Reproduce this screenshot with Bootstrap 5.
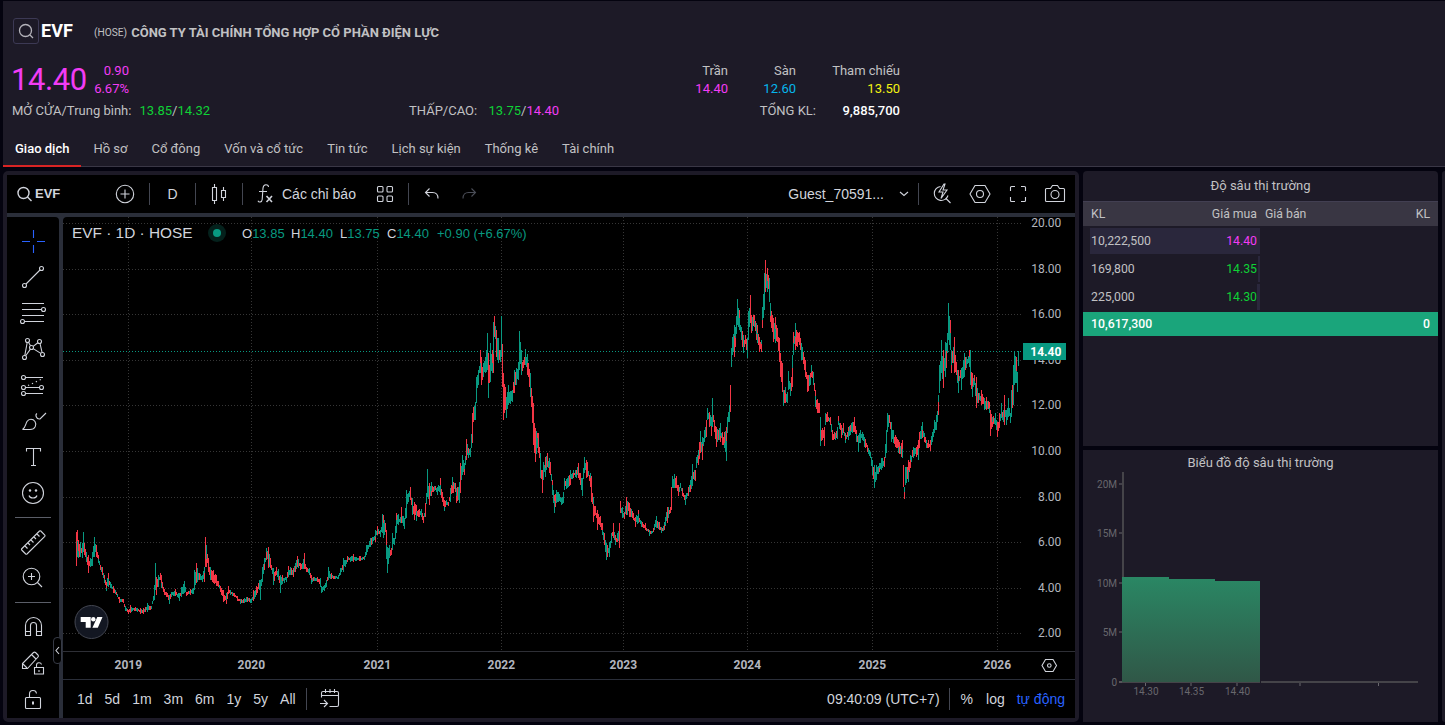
<!DOCTYPE html>
<html lang="vi">
<head>
  <meta charset="UTF-8" />
  <meta name="viewport" content="width=device-width, initial-scale=1">
  <title>EVF - Giao dịch</title>
  <link href="https://cdn.jsdelivr.net/npm/bootstrap@5.3.0/dist/css/bootstrap.min.css" rel="stylesheet" />
  <style>
    body {
      height: 725px;
      overflow: hidden;
      background: #04030f;
      color: #c1c1c3;
      font: 13px/18px Roboto, sans-serif;
      padding: 1px 0 3px 3px;
    }
    .fuchsia { color: #f23cf5; }
    .up { color: #0fd136; }
    .floor { color: #06b6ec; }
    .ref { color: #f3f312; }

    /* header */
    .stock-head { height: 166px; background: #1d1a27; border-bottom: 1px solid #3a3746; flex: none; }
    .info { width: 897px; padding: 17px 0 0 10px; }
    .search-box { width: 26px; height: 26px; border: 1px solid #3c3954; border-radius: 3px; }
    .code { font-size: 18px; width: 55px; padding-left: 2px; }
    .exch { font-size: 10.2px; }
    .price { font-size: 31px; line-height: 36px; width: 82px; margin-left: -2px; letter-spacing: -.4px; }
    .chg { width: 36px; }
    .tabs { padding-left: 0; margin-top: 11px; height: 36px; }
    .tabs a { color: #c1c1c3; text-decoration: none; padding: 9px 12px 0; height: 36px; }
    .tabs a.active { color: #fff; font-weight: 500; border-bottom: 2px solid #d92424; }

    /* chart widget */
    .tv { width: 1076px; height: 551px; border: 4px solid #1d1a27; border-radius: 5px; background: #2a2e39; color: #d1d4dc; font: 14px/18px "Liberation Sans", Arial, sans-serif; }
    .tv svg { display: block; flex: none; }
    .tv-top { height: 38px; background: #000; }
    .tv-top .cell { display: flex; align-items: center; justify-content: center; flex: none; }
    .vline { width: 1px; height: 22px; background: #434651; flex: none; margin: 0 4px; }
    .tools { width: 52px; background: #000; padding-top: 6px; border-radius: 0 4px 0 0; }
    .tools .tool { height: 36px; display: flex; align-items: center; justify-content: center; }
    .tools hr { width: 36px; margin: 6px auto; border: 0; height: 1px; background: #5b5e68; opacity: 1; }
    .pane { width: 1012px; background: #000; border-radius: 4px 0 0 0; }
    .ic { fill: none; stroke: #d1d4dc; stroke-width: 1.1; }
    .legend { top: 6px; left: 9px; height: 20px; }
    .legend .sym { font-size: 15.4px; width: 136px; }
    .legend .ohlc { font-size: 13px; color: #d1d4dc; padding-top: 1px; }
    .legend i { font-style: normal; color: #089981; }
    .dot { width: 18px; height: 18px; border-radius: 50%; background: #04211c; margin-right: 16px; }
    .dot::after { content: ""; display: block; width: 8px; height: 8px; margin: 5px; border-radius: 50%; background: #089981; }
    .handle { left: 46px; top: 420px; width: 9px; height: 27px; background: #000; border: 1px solid #363a45; border-radius: 4px; }
    .tv-foot { height: 39px; border-top: 1px solid #2a2e39; }
    .tv-foot .rng { padding: 0 6px; }
    .axis { font: 12px Roboto, sans-serif; fill: #b2b5be; }

    /* depth */
    .side { width: 355px; margin-left: 4px; font-size: 12.25px; }
    .panel { background: #1d1a27; }
    .side-title { height: 30px; padding-top: 6px; text-align: center; border-radius: 4px 4px 0 0; }
    .depth-head { height: 25px; background: #393643; border-top: 1px solid #423f52; padding-top: 3px; }
    .half { width: 177px; flex: none; display: flex; justify-content: space-between; padding: 0 3px 0 8px; position: relative; }
    .half.sell { width: 178px; padding: 0 8px 0 5px; }
    .depth-row { height: 28px; padding: 2px 0 0; }
    .depth-row .half { height: 26px; align-items: center; }
    .depth-row .bar { position: absolute; right: 0; top: 0; height: 26px; background: #2a273c; }
    .depth-row span { position: relative; }
    .depth-total { height: 24px; margin-top: 2px; background: #1aa57b; color: #fff; font-weight: 500; padding: 0 8px; }
    .depth-axis { font: 10px Roboto, sans-serif; fill: #68676d; }
  </style>
</head>
<body class="d-flex flex-column">

<div class="stock-head">
  <div class="info">
    <div class="d-flex align-items-center">
      <div class="search-box d-flex align-items-center justify-content-center">
        <svg width="16" height="16" fill="none" stroke="#b4b3ba" stroke-width="1.3"><circle cx="7.5" cy="7.5" r="6"/><path d="M12 12l3 3"/></svg>
      </div>
      <div class="code fw-bold text-white">EVF</div>
      <div class="d-flex align-items-center pt-1"><span class="exch me-1">(HOSE)</span><b>CÔNG TY TÀI CHÍNH TỔNG HỢP CỔ PHẦN ĐIỆN LỰC</b></div>
    </div>
    <div class="d-flex" style="margin-top:18px">
      <div class="price fuchsia">14.40</div>
      <div class="chg text-end fuchsia">0.90<br>6.67%</div>
      <div class="ms-auto d-flex text-end">
        <div>Trần<br><span class="fuchsia">14.40</span></div>
        <div style="width:68px">Sàn<br><span class="floor">12.60</span></div>
        <div style="width:104px">Tham chiếu<br><span class="ref">13.50</span></div>
      </div>
    </div>
    <div class="d-flex mt-1">
      <div style="width:397px;margin-left:-1px"><span style="margin-right:8px">MỞ CỬA/Trung bình:</span><span class="up">13.85</span>/<span class="up">14.32</span></div>
      <div><span class="me-2">THẤP/CAO:</span> <span class="up">13.75</span>/<span class="fuchsia">14.40</span></div>
      <div class="ms-auto">TỔNG KL:</div>
      <div class="text-white text-end fw-medium" style="width:84px;font-weight:500">9,885,700</div>
    </div>
  </div>
  <nav class="tabs d-flex">
    <a class="active" href="#">Giao dịch</a>
    <a href="#">Hồ sơ</a>
    <a href="#">Cổ đông</a>
    <a href="#">Vốn và cổ tức</a>
    <a href="#">Tin tức</a>
    <a href="#">Lịch sự kiện</a>
    <a href="#">Thống kê</a>
    <a href="#">Tài chính</a>
  </nav>
</div>

<div class="d-flex mt-1">
  <div class="tv d-flex flex-column">
    <!-- top toolbar -->
    <div class="tv-top d-flex align-items-center">
      <div class="cell justify-content-start" style="width:98px;padding-left:9px">
        <svg class="ic" width="19" height="18" style="stroke-width:1.4"><circle cx="7.5" cy="8" r="5.5"/><path d="M11.5 12l4 4"/></svg>
        <b style="font-size:13px">EVF</b>
      </div>
      <div class="cell" style="width:40px"><svg class="ic" width="20" height="20"><circle cx="10" cy="10" r="8.7"/><path d="M10 5.5v9M5.5 10h9"/></svg></div>
      <div class="vline"></div>
      <div class="cell" style="width:37px">D</div>
      <div class="vline"></div>
      <div class="cell" style="width:38px"><svg class="ic" width="28" height="28"><path d="M7.5 7.500h4v13h-4zM9.500 4v3.500M9.500 20.500v3.500M16.500 10.500h4v7h-4zM18.500 7v3.500M18.500 17.500v3.500"/></svg></div>
      <div class="vline"></div>
      <div class="cell justify-content-start" style="width:119px;padding-left:5px">
        <svg class="ic" width="28" height="28"><path d="M16.500 7c0-3-5-3.500-5.500 1l-.8 11.500c-.3 3-3.500 3.200-4.200 1.200M7 11.500h8"/><path d="M14.500 16l5.500 6M20 16l-5.500 6" stroke-width="1.600"/></svg>
        <span style="margin-left:2px">Các chỉ báo</span>
      </div>
      <div class="cell" style="width:38px"><svg class="ic" width="18" height="18"><rect x="1.500" y="1.500" width="5.500" height="5.500" rx="1"/><rect x="11" y="1.500" width="5.500" height="5.500" rx="1"/><rect x="1.500" y="11" width="5.500" height="5.500" rx="1"/><rect x="11" y="11" width="5.500" height="5.500" rx="1"/></svg></div>
      <div class="vline"></div>
      <div class="cell" style="width:37px"><svg class="ic" width="16" height="14"><path d="M5.500 1.500l-4 4 4 4M1.500 5.500h7c3 0 5.500 2 5.500 6"/></svg></div>
      <div class="cell" style="width:38px"><svg class="ic" width="16" height="14" style="stroke:#4a4d57"><path d="M10.500 1.500l4 4-4 4M14.500 5.500h-7c-3 0-5.500 2-5.500 6"/></svg></div>
      <div class="ms-auto" style="padding-right:9px">Guest_70591...</div>
      <div class="cell" style="width:21px"><svg class="ic" width="10" height="6"><path d="M1 1l4 3.500L9 1"/></svg></div>
      <div class="vline"></div>
      <div class="cell" style="width:38px"><svg class="ic" width="22" height="22"><path d="M9.500 3.500a7 7 0 1 0 7.500 9M15 15.500l4.500 4.500M13 1L8 9h4l-2 6.500L16 7h-4l2-6z"/></svg></div>
      <div class="cell" style="width:38px"><svg class="ic" width="22" height="20"><path d="M6 1.500h10l5 8.500-5 8.500H6L1 10z"/><circle cx="11" cy="10" r="3.500"/></svg></div>
      <div class="cell" style="width:37px"><svg class="ic" width="18" height="18"><path d="M1.500 6V2.500a1 1 0 0 1 1-1H6M12 1.500h3.500a1 1 0 0 1 1 1V6M16.500 12v3.500a1 1 0 0 1-1 1H12M6 16.500H2.500a1 1 0 0 1-1-1V12"/></svg></div>
      <div class="cell" style="width:38px;margin-right:1px"><svg class="ic" width="22" height="20"><path d="M2.500 4.500h4l2-3h5l2 3h4a1 1 0 0 1 1 1v11a1 1 0 0 1-1 1h-17a1 1 0 0 1-1-1v-11a1 1 0 0 1 1-1z"/><circle cx="11" cy="10.500" r="4"/></svg></div>
    </div>

    <div class="d-flex position-relative mt-1" style="height:501px">
      <!-- drawing tools -->
      <div class="tools me-1" id="tools"></div>

      <div class="pane position-relative d-flex flex-column">
        <svg id="chart" width="1012" height="462" viewBox="63 217 1012 462"></svg>
        <div class="legend position-absolute d-flex align-items-center">
          <span class="sym">EVF · 1D · HOSE</span>
          <span class="dot"></span>
          <span class="ohlc d-flex">
            <span style="width:49px">O<i>13.85</i></span><span style="width:49px">H<i>14.40</i></span><span style="width:47px">L<i>13.75</i></span><span style="width:50px">C<i>14.40</i></span><i>+0.90 (+6.67%)</i>
          </span>
        </div>
        <div class="tv-foot d-flex align-items-center" style="padding-left:8px">
          <span class="rng">1d</span><span class="rng">5d</span><span class="rng">1m</span><span class="rng">3m</span><span class="rng">6m</span><span class="rng">1y</span><span class="rng">5y</span><span class="rng">All</span>
          <div class="vline"></div>
          <svg class="ic" width="22" height="22" style="margin-left:8px"><path d="M2.500 9.500V5a1.500 1.500 0 0 1 1.500-1.500h14A1.500 1.500 0 0 1 19.500 5v12a1.500 1.500 0 0 1-1.500 1.500h-7.500M2.500 7.500h17M6.500 1v4M11 1v4M15.500 1v4M1 15.500h7M5 12l3.500 3.500L5 19"/></svg>
          <span class="ms-auto">09:40:09 (UTC+7)</span>
          <div class="vline" style="margin-left:9px;margin-right:11px"></div>
          <span>%</span>
          <span style="margin-left:13px">log</span>
          <span style="margin:0 10px 0 12px;color:#2962ff">tự động</span>
        </div>
      </div>
      <div class="handle position-absolute"><svg class="ic" width="7" height="25"><path d="M5 9l-3 3.500L5 16"/></svg></div>
    </div>
  </div>

  <div class="side">
    <div class="panel" style="height:275px;border-radius:4px 4px 0 0">
      <div class="side-title" style="font-size:13px">Độ sâu thị trường</div>
      <div class="depth-head d-flex">
        <div class="half"><span>KL</span><span>Giá mua</span></div>
        <div class="half sell"><span>Giá bán</span><span>KL</span></div>
      </div>
      <div id="bids"></div>
      <div class="depth-total d-flex align-items-center justify-content-between"><span>10,617,300</span><span>0</span></div>
    </div>
    <div class="panel mt-1" style="height:272px">
      <div class="text-center" style="height:22px;padding-top:4px;font-size:13px">Biểu đồ độ sâu thị trường</div>
      <svg class="d-block" id="depth" width="355" height="250" viewBox="1083 472 355 250"></svg>
    </div>
  </div>
  <div class="panel ms-auto rounded-start" style="width:3px"></div>
</div>

<script src="https://cdn.jsdelivr.net/npm/bootstrap@5.3.0/dist/js/bootstrap.bundle.min.js"></script>
<script>
  // ---- left toolbar icons (28x28 box) ----
  const c = (x, y, r = 2) => `<circle cx="${x}" cy="${y}" r="${r}"/>`;
  const p = d => `<path d="${d}"/>`;
  const tools = [
    `<g stroke="#2962ff">${p('M14.5 3v8M14.5 18v8M3 14.500h8M18 14.500h8')}</g>`,
    c(22.5, 5.5) + c(5.5, 22.5) + p('M7 21L21 7'),
    p('M3 4.500h22M3 10.500h19.500M3 16.500h22M5.500 22.500H25') + c(24.5, 10.5) + c(3.5, 22.5),
    c(8.5, 5.5) + c(20.5, 6.5) + c(12.5, 12.5) + c(5.5, 22.5) + c(23.5, 19.5) + p('M9.500 7.300l2 3.500M8.200 7.500L5.800 20.500M6.700 20.800l4.700-6.700M14.200 11.400l4.600-3.600M21 8.500l2.100 9M14.200 13.600l7.600 4.800'),
    c(4.5, 6.5) + c(4.5, 16.5) + c(22.5, 16.5) + c(4.5, 22.5) + p('M6.500 6.500H24M6.500 16.500h14M6.500 22.500H24') + '<path d="M9 14.500l14-6.500" stroke-dasharray="1.300 3"/>',
    p('M3.500 22.500c3-1.500 3-5.500 4.500-8 1.800-3 6-3 8 0 1.800 3 .5 8-5 8zM18 6.500c-2 1-1 6 3 5.500l6-6'),
    p('M7.500 8.500v-3h14v3M14.500 5.500v17M12 22.500h5'),
    c(14, 14, 10.5) + p('M10 16.500c1 3.300 7 3.300 8 0') + '<g fill="#d1d4dc" stroke="none">' + c(11, 11.5, 1.2) + c(17, 11.5, 1.2) + '</g>',
    null,
    p('M2.500 21L20.500 3a1 1 0 0 1 1.300 0l4 4a1 1 0 0 1 0 1.300L8 26a1 1 0 0 1-1.300 0l-4-4a1 1 0 0 1-.2-1zM6 18l2.500 2.500M9 15l2 2M12 12l2.500 2.500M15 9l2 2M18 6l2.500 2.500'),
    c(12.5, 12.5, 8.3) + p('M12.500 9v7M9 12.500h7M18.500 18.500l4.500 4.500'),
    null,
    p('M6.500 22.500v-10a8 8 0 0 1 16 0v10h-5v-10a3 3 0 0 0-6 0v10zM6.500 18.500h5M17.500 18.500h5'),
    p('M3.500 19.500v-5l11-11a1.500 1.500 0 0 1 2 0l2.500 2.500a1.500 1.500 0 0 1 0 2L8.500 19.500zM12.500 5.500l4.500 4.500M4 15l4 4M15.500 18.500h9v6.500h-9zM17.500 18.500v-2.500c0-3 4.500-3 5-.5M20 21v2'),
    p('M7.500 12.500h13a1 1 0 0 1 1 1v9a1 1 0 0 1-1 1h-13a1 1 0 0 1-1-1v-9a1 1 0 0 1 1-1zM10.500 12.500V9c0-4.500 6.500-4.500 7-.5') + '<path d="M14 16.500v3" stroke-width="2"/>'
  ];
  document.getElementById('tools').innerHTML = tools.map(t =>
    t ? `<div class="tool"><svg class="ic" width="28" height="28">${t}</svg></div>` : '<hr>').join('');

  // ---- order book ----
  const bids = [
    { kl: '10,222,500', gia: '14.40', cls: 'fuchsia', bar: 170 },
    { kl: '169,800', gia: '14.35', cls: 'up', bar: 2 },
    { kl: '225,000', gia: '14.30', cls: 'up', bar: 3 }
  ];
  document.getElementById('bids').innerHTML = bids.map(b => `
    <div class="depth-row"><div class="half">
      <div class="bar" style="width:${b.bar}px"></div>
      <span>${b.kl}</span><span class="${b.cls}">${b.gia}</span>
    </div></div>`).join('');

  // ---- price history: x:high-low, in thirds of a pixel from each block's origin ----
  const blocks = [
    { x: 60, y: 480, d: '49:155-258 52:150-230 55:180-235 60:185-230 67:190-235 70:155-215 74:190-225 80:215-245 85:225-280 92:235-260 98:215-258 104:170-230 108:195-230 115:225-250 120:255-270 127:260-285 133:285-310 139:305-333 145:280-320 151:305-325 160:318-340 170:335-345 178:352-370 190:358-370 195:378-393 205:390-402 212:375-398 225:382-392 240:385-402 250:385-402 262:370-395 275:378-388 283:315-360 286:248-330 289:290-345 295:285-320 301:278-300 305:285-325 312:328-345 320:335-352 327:345-372 335:335-350 345:328-348 357:340-362 365:322-350 373:302-340 380:335-348 390:328-345 399:325-343 403:270-330 410:250-310 418:280-300 428:285-305 434:260-305 437:170-260 440:195-262 445:235-275 452:260-300 460:270-310 470:285-318 480:318-335 490:330-365 500:340-373 505:318-342 512:330-345 522:340-352 532:348-362 542:358-373 552:355-370 562:350-365 575:358-370 580:330-362 590:318-345 598:300-330 601:300-360 606:262-305 613:235-270 620:205-240 625:202-265 632:235-265 640:265-315 648:262-285 655:268-300 661:285-338 668:285-312 678:290-305 685:258-290 692:262-285 700:265-290 707:250-275 712:228-260 720:250-270 727:250-268 734:218-268 740:262-275 748:265-285 755:285-312 762:290-302 772:290-305 780:295-320 785:318-340 792:315-332 800:300-320 806:262-300 815:280-298 825:288-298 835:285-298 842:265-285 849:235-275 856:240-260 862:228-245 870:232-245 880:222-245 890:232-242 899:228-242' },
    { x: 360, y: 240, d: '0:948-962 12:948-960 20:915-945 30:895-920 38:890-912 45:870-905 52:858-885 60:870-890 66:822-880 70:825-895 76:850-875 80:870-958 83:920-1000 88:915-955 95:925-945 98:880-930 104:895-915 110:820-880 115:822-855 122:830-850 125:800-850 134:835-868 140:750-835 146:760-785 150:740-780 157:775-825 163:785-840 170:795-842 178:808-830 185:808-832 191:828-850 197:790-830 202:688-770 208:730-795 214:725-768 222:738-752 232:740-765 240:713-765 246:755-785 252:780-812 258:780-795 265:785-798 270:745-785 277:712-760 285:730-755 290:745-790 298:725-790 302:668-760 308:645-705 314:670-705 319:597-660 325:625-655 332:625-650 337:520-610 341:500-545 346:485-540 350:410-490 355:390-435 361:330-400 364:350-435 370:370-410 376:350-400 382:280-390 386:340-475 391:310-425 396:330-400 400:245-400 404:228-290 410:270-350 415:295-370 420:330-365 424:228-350 428:312-440 431:400-540 436:440-510 440:470-535 446:435-495 452:452-492 458:450-485 463:390-460 470:385-435 475:365-420 478:273-390 484:330-405 490:360-385 496:327-375 502:342-405 506:370-410 510:400-470 515:445-500 520:490-615 524:550-640 527:565-665 532:580-625 536:580-640 541:640-715 546:690-760 551:665-720 556:650-710 561:640-680 567:655-700 572:665-705 578:720-765 583:765-820 590:750-790 596:755-785 603:775-795 609:755-790 614:715-750 622:715-745 630:690-735 640:690-715 650:690-715 656:668-715 662:700-735 668:715-768 673:650-700 678:660-715 683:665-710 690:700-740 695:708-785 701:770-845 707:798-825 713:810-870 720:828-860 727:850-885 734:880-915 740:910-960 747:905-950 754:880-910 760:850-895 765:885-915 772:880-905 778:850-925 782:783-820 788:800-835 794:815-838 799:770-825 808:790-830 818:812-835 826:830-860 835:810-850 845:842-860 857:850-870 868:870-887 878:872-880 889:828-865 898:845-870 905:862-878 914:845-870 922:800-850 930:800-820 934:740-810 938:708-745 944:702-745 950:708-745 956:735-768' },
    { x: 680, y: 240, d: '0:730-745 6:745-768 12:765-780 16:765-795 24:740-768 32:720-755 38:672-738 45:690-722 50:650-685 55:630-675 62:573-640 66:590-660 72:570-605 78:540-590 82:503-540 88:515-560 93:530-588 97:474-560 102:540-575 109:560-620 116:570-600 121:550-605 127:575-615 134:575-625 139:560-662 143:530-580 148:495-545 151:435-515 155:325-380 158:290-345 162:255-350 167:260-320 173:178-255 178:210-270 184:260-300 190:285-340 196:285-312 202:295-355 206:213-300 210:165-250 215:225-280 222:225-260 228:250-300 233:255-310 238:290-335 245:300-335 248:200-265 253:100-210 257:60-155 262:85-155 267:115-185 272:190-245 280:235-305 286:230-310 293:265-305 298:295-365 302:340-410 307:370-455 311:450-498 316:440-490 321:455-490 326:393-450 332:430-468 337:345-440 340:275-345 346:248-330 352:275-320 358:275-315 364:310-360 368:322-360 375:360-410 381:405-455 386:405-452 390:400-435 394:375-410 400:395-435 406:450-500 412:478-518 417:490-520 422:530-618 427:565-600 433:560-618 437:518-555 442:515-545 450:530-555 458:570-600 466:580-600 472:560-598 476:528-555 484:555-595 490:550-580 496:580-610 504:560-600 510:555-585 518:545-580 524:530-575 530:570-605 534:585-635 540:570-610 547:575-600 554:590-620 562:615-635 570:635-655 576:660-705 583:675-745 590:675-720 598:670-695 605:655-690 612:650-680 618:570-640 623:520-575 628:525-550 634:545-605 640:570-610 647:585-620 655:600-640 663:610-650 667:600-655 670:675-740 673:740-777 677:680-735 685:660-725 692:645-685 700:620-655 708:620-650 714:600-660 718:575-625 727:545-595 734:580-605 740:600-625 750:600-632 757:575-605 763:540-580 769:525-570 774:465-525 779:375-460 785:300-400 790:330-443 796:305-410 800:310-385 805:190-300 810:240-330 815:330-400 820:320-370 824:290-400 829:365-405 834:390-460 840:390-415 845:385-450 853:340-410 860:350-385 867:330-380 871:330-435 876:400-470 882:405-435 888:410-505 895:460-490 904:450-495 912:475-510 920:470-510 928:485-520 932:510-588 938:530-560 945:520-555 952:545-592 958:520-565 963:488-535 968:515-540 973:465-555 978:510-555 985:475-530 990:520-550 995:450-530 1000:375-495 1004:335-435 1009:350-430 1013:395-455 1016:333-378' }
  ];
  const knots = blocks.flatMap(b => b.d.split(' ').map(s => {
    const [x, hi, lo] = s.split(/[:-]/).map(Number);
    return { x: Math.floor(b.x + x / 3), hi: b.y + hi / 3, lo: b.y + lo / 3 };
  })).sort((a, b) => a.x - b.x);

  let seed = 4021;
  const rnd = () => (seed = (seed * 16807) % 2147483647) / 2147483647;
  let red = '', green = '';
  const bar = (isRed, x, hi, lo) => {
    const s = `M${x + .5} ${Math.round(hi)}V${Math.max(Math.round(lo), Math.round(hi) + 2)}`;
    isRed ? red += s : green += s;
  };
  knots.forEach((k, i) => {
    const prev = knots[i - 1] || k, n = knots[i + 1];
    // direction over the neighbouring knots sets how likely a red candle is
    const slope = ((n || k).hi + (n || k).lo) - (prev.hi + prev.lo);
    const odds = Math.min(.72, Math.max(.18, .44 + slope * .02));
    const isRed = rnd() < odds;
    if (rnd() < .3 && k.lo - k.hi > 8) {
      const mid = k.hi + (k.lo - k.hi) * (.3 + rnd() * .4);
      bar(isRed, k.x, k.hi, mid);
      bar(!isRed, k.x, mid, k.lo);
    } else bar(isRed, k.x, k.hi, k.lo);
    if (!n) return;
    for (let x = k.x + 1; x < n.x; x++) {
      const t = (x - k.x) / (n.x - k.x);
      const hi = k.hi + (n.hi - k.hi) * t, lo = k.lo + (n.lo - k.lo) * t, h = lo - hi;
      bar(rnd() < odds, x, hi + h * rnd() * .4, lo - h * rnd() * .35);
    }
  });

  const years = { 2019: 128, 2020: 251, 2021: 377, 2022: 501, 2023: 623, 2024: 747, 2025: 872, 2026: 997 };
  const prices = [20, 18, 16, 14, 12, 10, 8, 6, 4, 2];
  const priceY = v => Math.round(223.3 + (20 - v) * 22.77);
  let g = '<g stroke="#363636" stroke-dasharray="1 2" shape-rendering="crispEdges">';
  Object.values(years).forEach(x => g += `<path d="M${x + .5} 217V651"/>`);
  prices.forEach(v => g += `<path d="M63 ${priceY(v) + .5}H1022"/>`);
  g += '</g>';
  g += `<g fill="none" shape-rendering="crispEdges"><path stroke="#089981" stroke-dasharray="1 2" d="M63 351.500H1022"/>
    <path stroke="#f23645" d="${red}"/><path stroke="#089981" d="${green}"/>
    <path stroke="#2e2f36" d="M63 651.500H1075"/></g><g class="axis">`;
  prices.forEach(v => g += `<text x="1061.300" y="${priceY(v) + 4.2}" text-anchor="end">${v.toFixed(2)}</text>`);
  Object.entries(years).forEach(([y, x]) => g += `<text x="${x + .3}" y="668.500" text-anchor="middle" font-weight="700">${y}</text>`);
  g += '</g><path fill="#089981" d="M1023 343h43v17h-43z"/><text class="axis" x="1061.300" y="356" text-anchor="end" style="font-weight:700;fill:#fff">14.40</text>';
  // axis settings
  g += '<g class="ic"><path d="M1045.500 659.500h7.500l3.500 6-3.500 6h-7.500l-3.500-6z"/><circle cx="1049.300" cy="665.500" r="1.800"/></g>';
  // logo
  g += `<circle cx="91.500" cy="622" r="16.500" fill="#131722" stroke="#434651"/>
    <g fill="#fff"><path d="M80.700 617h10v10.700h-5V622h-5zM97.300 617h5.200l-4.700 10.700h-5.400z"/><circle cx="93.300" cy="619.300" r="2.200"/></g>`;
  document.getElementById('chart').innerHTML = g;

  // ---- depth chart ----
  let d = `<defs><linearGradient id="gr" gradientUnits="userSpaceOnUse" x1="0" y1="577" x2="0" y2="682"><stop offset="0" stop-color="#2a8764"/><stop offset="1" stop-color="#305747"/></linearGradient></defs>
    <g fill="#454449"><path d="M1122 472h2v210h-2zM1119 681h299v2h-299z"/></g>
    <path fill="url(#gr)" d="M1122 682V577h47v2h46v2h45v101z"/>
    <path fill="#1d1a27" d="M1260 680h1v4h-1z"/><g class="depth-axis">`;
  [['20M', 484], ['15M', 533], ['10M', 583], ['5M', 632], ['0', 682]].forEach(([t, y]) =>
    d += `<rect x="1119" y="${y - .5}" width="3" height="1"/><text x="1117" y="${y + 4}" text-anchor="end">${t}</text>`);
  [['14.30', 1145.5], ['14.35', 1191], ['14.40', 1237], ['', 1300], ['', 1378.500]].forEach(([t, x]) =>
    d += `<rect x="${x - .5}" y="683" width="1" height="3"/><text x="${x + .5}" y="695" text-anchor="middle">${t}</text>`);
  document.getElementById('depth').innerHTML = d + '</g>';
</script>
</body>
</html>
